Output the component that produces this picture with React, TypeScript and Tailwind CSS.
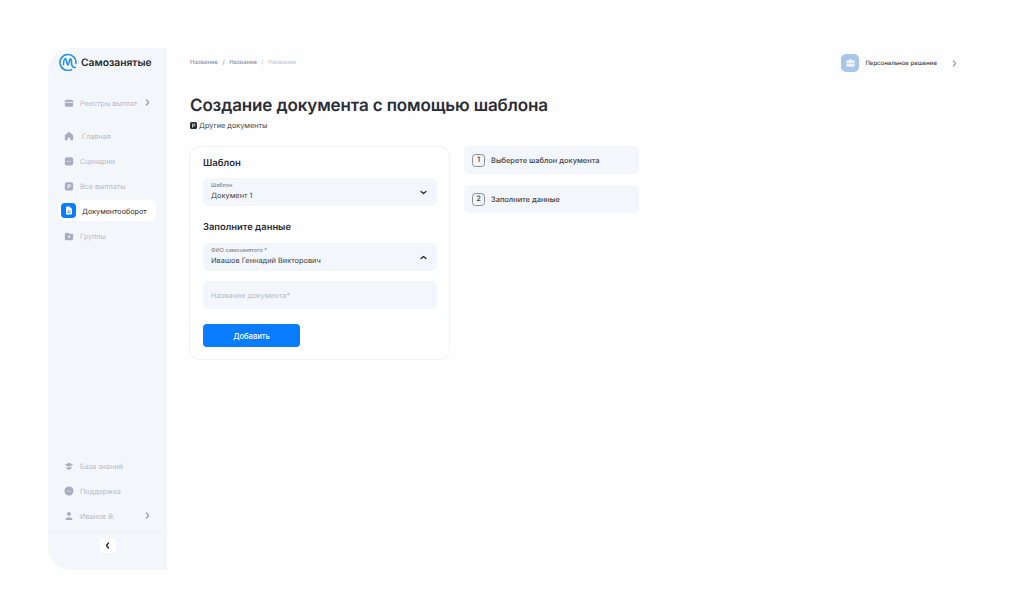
import React from "react";

const f = { fontFamily: "Inter, 'Noto Sans', sans-serif" };

const Chevron = ({ dir = "right", cls = "", size = 7 }: { dir?: "right" | "left" | "up" | "down"; cls?: string; size?: number }) => {
  const d = { right: "M3.5 1.5 6.5 5 3.5 8.5", left: "M6.5 1.5 3.5 5 6.5 8.5", up: "M1.5 6.5 5 3.5 8.5 6.5", down: "M1.5 3.5 5 6.5 8.5 3.5" }[dir];
  return (
    <svg width={size} height={size} viewBox="0 0 10 10" fill="none" className={`shrink-0 ${cls}`}>
      <path d={d} stroke="currentColor" strokeWidth="1.9" strokeLinecap="round" strokeLinejoin="round" />
    </svg>
  );
};

const Logo = () => (
  <svg width="18" height="18" viewBox="0 0 18 18" fill="none" className="shrink-0">
    <path d="M12.500 16.600A8 8 0 1 1 16.900 10.500" stroke="#1a8cff" strokeWidth="1.5" strokeLinecap="round" />
    <path d="M4.400 11.500c.3-2.700 1-6 2-6 1.200 0 1.200 6.500 2.500 6.500 1.200 0 1.200-6 2.500-6.200 1.300-.2 1 5.400 1.600 7 .5 1.300 1.900 1.700 3.300 1.700" stroke="#1a8cff" strokeWidth="1.5" strokeLinecap="round" />
  </svg>
);

const icons: Record<string, React.ReactNode> = {
  wallet: (
    <>
      <rect x="1" y="2" width="10" height="8.5" rx="1.8" fill="#a9adc0" />
      <rect x="1" y="4.7" width="10" height="1" fill="#f3f7fb" />
    </>
  ),
  home: <path d="M6 1 11 5v5.5a.7.7 0 0 1-.7.7H7.6V8H4.4v3.2H1.7a.7.7 0 0 1-.7-.7V5z" fill="#a9adc0" />,
  scen: (
    <>
      <rect x="1" y="1.5" width="10" height="10" rx="2.4" fill="#a9adc0" />
      <path d="M3.2 6.5h5.600" stroke="#f3f7fb" strokeWidth="1" strokeDasharray="1.2 .7" />
    </>
  ),
  pay: (
    <>
      <rect x="1" y="1.5" width="10" height="10" rx="2.4" fill="#a9adc0" />
      <path d="M4.800 9V4.300h2a1.300 1.300 0 0 1 0 2.600h-2" stroke="#f3f7fb" strokeWidth="1.100" fill="none" />
    </>
  ),
  folder: (
    <>
      <path d="M1 3.400C1 2.600 1.600 2 2.400 2h2.400l1.200 1.300h3.700c.8 0 1.300.6 1.300 1.300v5c0 .8-.6 1.400-1.300 1.400H2.400C1.600 11 1 10.400 1 9.600z" fill="#a9adc0" />
      <path d="M6 5.400v3M4.500 6.900h3" stroke="#f3f7fb" strokeWidth="1" />
    </>
  ),
  edu: (
    <>
      <path d="M6 2 11 4.500 6 7 1 4.500z" fill="#a9adc0" />
      <path d="M3 6.500v2.300c0 .8 1.500 1.700 3 1.700s3-.9 3-1.700V6.500L6 8z" fill="#a9adc0" />
    </>
  ),
  chat: (
    <>
      <circle cx="6" cy="6" r="5.500" fill="#a9adc0" />
      <path d="M3.800 6.200h4.400" stroke="#f3f7fb" strokeWidth="1" strokeDasharray="1 .7" />
    </>
  ),
  user: (
    <>
      <circle cx="6" cy="3.700" r="2.400" fill="#a9adc0" />
      <path d="M1.800 10.800c0-2 1.900-3.200 4.200-3.200s4.200 1.200 4.200 3.200z" fill="#a9adc0" />
    </>
  ),
};

const Icon = ({ name }: { name: string }) => (
  <svg width="10" height="10" viewBox="0 0 12 12" className="shrink-0">
    {icons[name]}
  </svg>
);

const Item = ({ icon, label, gap = "gap-[6px]", chevron }: { icon: string; label: string; gap?: string; chevron?: string }) => (
  <div className={`h-[25px] pl-[16px] pr-[16px] flex items-center ${gap} text-[7.200px] leading-[10px] text-[#b7bacb]`}>
    <Icon name={icon} />
    <span className="whitespace-nowrap pt-[3px]">{label}</span>
    {chevron && <Chevron cls={`${chevron} text-[#9a9eb3]`} />}
  </div>
);

const Sidebar = () => (
  <aside className="w-[119px] h-[522px] bg-[#f3f7fb] rounded-l-[24px] flex flex-col shrink-0">
    <div className="h-[28px] pl-[11px] flex items-center gap-[4px]">
      <Logo />
      <span className="text-[10.300px] leading-[14px] pt-[1px] font-semibold text-[#26282f] whitespace-nowrap">Самозанятые</span>
    </div>
    <div className="mt-[14px]">
      <Item icon="wallet" label="Реестры выплат" chevron="ml-[1px]" />
    </div>
    <div className="mt-[8px]">
      <Item icon="home" label="Главная" gap="gap-[8px]" />
      <Item icon="scen" label="Сценарии" />
      <Item icon="pay" label="Все выплаты" />
      <div className="h-[21px] my-[2px] ml-[10px] w-[98px] bg-white rounded-[6px] flex items-center gap-[6px] pl-[3px] text-[7.200px] leading-[10px] text-[#2b2d36]">
        <div className="w-[15px] h-[15px] bg-[#0a7cff] rounded-[4px] flex items-center justify-center">
          <svg width="8" height="9" viewBox="0 0 8 9">
            <path d="M1 1.500C1 .9 1.500.5 2 .5h2.500L7 3v4.500c0 .6-.5 1-1 1H2c-.5 0-1-.4-1-1z" fill="#fff" />
            <path d="M2.500 5h3M2.500 6.500h3" stroke="#0a7cff" strokeWidth=".7" />
          </svg>
        </div>
        <span className="whitespace-nowrap pt-[3px]">Документооборот</span>
      </div>
      <Item icon="folder" label="Группы" />
    </div>
    <div className="mt-auto">
      <Item icon="edu" label="База знаний" />
      <Item icon="chat" label="Поддержка" />
      <Item icon="user" label="Иванов В." chevron="ml-auto" />
      <div className="border-t border-[#eef1f6] mt-[4px] h-[38px] pt-[5px] flex justify-center">
        <div className="w-[16px] h-[15px] bg-white rounded-[4px] flex items-center justify-center text-[#2b2d36]">
          <Chevron dir="left" />
        </div>
      </div>
    </div>
  </aside>
);

const Select = ({ label, value, dir }: { label: string; value: string; dir: "up" | "down" }) => (
  <div className="h-[28px] bg-[#f3f7fb] rounded-[5px] pl-[8px] pr-[10px] flex items-center justify-between">
    <div className="flex flex-col">
      <span className="text-[5.500px] leading-[7px] text-[#6e7280]">{label}</span>
      <span className="text-[7.400px] leading-[11px] text-[#3d3f4a]">{value}</span>
    </div>
    <Chevron dir={dir} cls="text-[#2b2d36]" />
  </div>
);

const Step = ({ n, text }: { n: number; text: string }) => (
  <div className="h-[28px] bg-[#f3f7fb] rounded-[5px] pl-[8px] flex items-center gap-[6px]">
    <div className="w-[13px] h-[13px] border border-[#8a8d99] rounded-[3.500px] flex items-center justify-center text-[7.500px] leading-[10px] font-medium text-[#3d3f4a]">
      {n}
    </div>
    <span className="text-[7.450px] leading-[10px] pt-[1px] font-medium text-[#3d3f4a]">{text}</span>
  </div>
);

export default function App() {
  return (
    <div className="w-[1024px] h-[608px] bg-white overflow-hidden">
      <div style={f} className="w-full h-full bg-[#fefefe] rounded-[24px] pt-[48px] pl-[48px] flex antialiased [text-rendering:geometricPrecision]">
        <Sidebar />
        <main className="pl-[23px] flex-1 pr-[66px]">
          <div className="flex items-center justify-between h-[30px]">
            <div className="mt-[1px] flex items-center gap-[4.500px] text-[5.900px] text-[#8b90a8] font-medium">
              <span>Название</span>
              <span>/</span>
              <span>Название</span>
              <span className="text-[#c5c8d6]">/</span>
              <span className="text-[#c5c8d6]">Название</span>
            </div>
            <div className="flex items-center">
              <div className="w-[18px] h-[18px] bg-[#a8c6ea] rounded-[5px] flex items-center justify-center">
                <svg width="9" height="8" viewBox="0 0 9 8">
                  <path d="M3 1.500V1c0-.3.2-.5.5-.5h2c.3 0 .5.2.5.5v.5M1 1.500h7c.3 0 .5.2.5.5v5c0 .3-.2.5-.5.5H1c-.3 0-.5-.2-.5-.5V2c0-.3.2-.5.5-.5z" fill="#eef3fa" stroke="#eef3fa" strokeWidth=".4" />
                  <path d="M.5 4.500h8" stroke="#a8c6ea" strokeWidth=".6" />
                </svg>
              </div>
              <span className="ml-[6px] text-[6px] font-medium text-[#3d3f4a] whitespace-nowrap">Персональное решение</span>
              <Chevron cls="ml-[14px] text-[#9a9eb3]" />
            </div>
          </div>
          <h1 className="mt-[16px] text-[17px] tracking-[-0.13px] leading-[24px] font-semibold text-[#2b2d36] whitespace-nowrap">
            Создание документа с помощью шаблона
          </h1>
          <div className="mt-[1px] flex items-center gap-[2px] text-[7.300px] leading-[12px] text-[#3d3f4a]">
            <svg width="7" height="7" viewBox="0 0 7 7">
              <rect width="7" height="7" rx="1.500" fill="#2b2d36" />
              <path d="M2.500 5.500V2h1.500a1 1 0 0 1 0 2H2.500" stroke="#fff" strokeWidth=".7" fill="none" />
            </svg>
            <span className="pt-[1px]">Другие документы</span>
          </div>
          <div className="mt-[14px] -ml-[1px] flex gap-[14px] items-start">
            <section className="w-[261px] h-[214px] bg-white border border-[#f0f2f6] rounded-[11px] pl-[13px] pr-[12.500px] pt-[10px]">
              <h2 className="text-[9.500px] leading-[14px] font-semibold text-[#2b2d36]">Шаблон</h2>
              <div className="mt-[7px]">
                <Select label="Шаблон" value="Документ 1" dir="down" />
              </div>
              <h2 className="mt-[15px] text-[9.400px] leading-[14px] font-semibold text-[#2b2d36]">Заполните данные</h2>
              <div className="mt-[8px]">
                <Select label="ФИО самозанятого *" value="Ивашов Геннадий Викторович" dir="up" />
              </div>
              <div className="mt-[10px] h-[28px] bg-[#f3f7fb] rounded-[5px] pl-[8px] flex items-center text-[7.350px] leading-[10px] text-[#b7bacb]">
                <span className="pt-[1px]">Название документа*</span>
              </div>
              <button className="mt-[15px] w-[97px] h-[23px] bg-[#0a7cff] rounded-[4px] text-white text-[7.600px] leading-[10px] pt-[2px] font-medium flex items-center justify-center">
                Добавить
              </button>
            </section>
            <div className="w-[175px] flex flex-col gap-[11px]">
              <Step n={1} text="Выберете шаблон документа" />
              <Step n={2} text="Заполните данные" />
            </div>
          </div>
        </main>
      </div>
    </div>
  );
}
